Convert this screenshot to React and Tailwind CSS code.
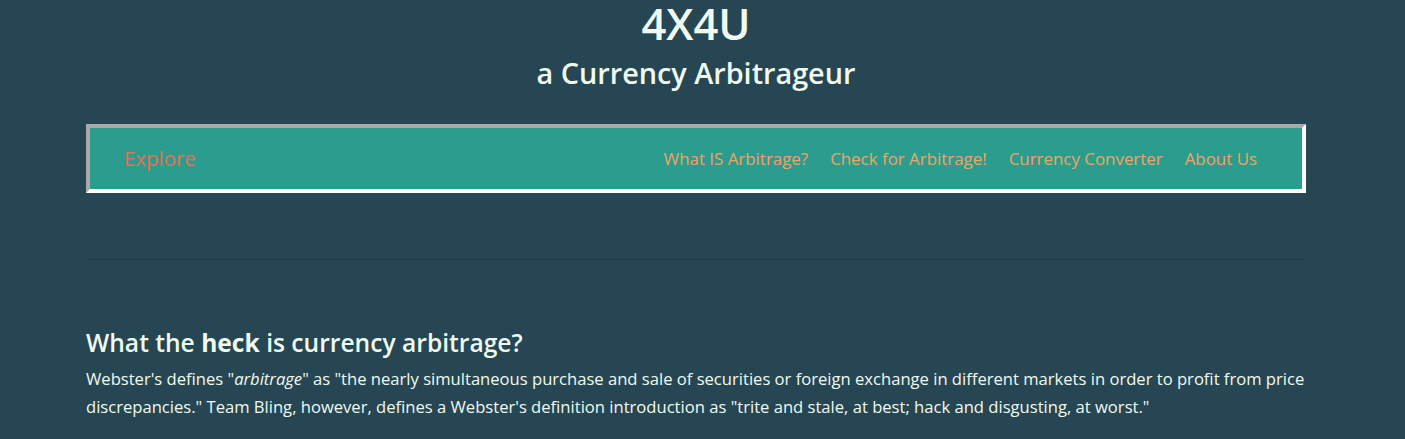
export default function App() {
  return (
    <div className="min-h-[439px] bg-[#264653] text-[#f1faee] font-['Open_Sans',sans-serif]">
      <div className="ml-[86px] w-[1220px]">
        <header className="text-center">
          <h1 className="text-[43.5px] font-semibold leading-[48px]">4X4U</h1>
          <h2 className="mt-[8px] text-[28.8px] font-semibold leading-[34px]">a Currency Arbitrageur</h2>
        </header>

        <nav className="mt-[34px] flex h-[69px] items-center justify-between border-4 border-t-[#a9a9a9] border-l-[#a9a9a9] border-r-white border-b-white bg-[#2a9d8f] pl-[34px] pr-[45px]">
          <a className="text-[20.4px] text-[#e76f51]" href="#">Explore</a>
          <ul className="flex gap-[22px] text-[16.9px] text-[#f4a261]">
            <li>What IS Arbitrage?</li>
            <li>Check for Arbitrage!</li>
            <li>Currency Converter</li>
            <li>About Us</li>
          </ul>
        </nav>

        <hr className="mt-[66px] border-t border-[#1f3d49]" />

        <section className="mt-[67px]">
          <h3 className="text-[24.6px] font-semibold leading-[32px]">
            What the <span className="font-bold">heck</span> is currency arbitrage?
          </h3>
          <p className="mt-[6px] text-[16.6px] leading-[27.5px]">
            Webster's defines "<em>arbitrage</em>" as "the nearly simultaneous purchase and sale of securities or
            foreign exchange in different markets in order to profit from price discrepancies." Team Bling, however,
            defines a Webster's definition introduction as "trite and stale, at best; hack and disgusting, at worst."
          </p>
        </section>
      </div>
    </div>
  );
}
